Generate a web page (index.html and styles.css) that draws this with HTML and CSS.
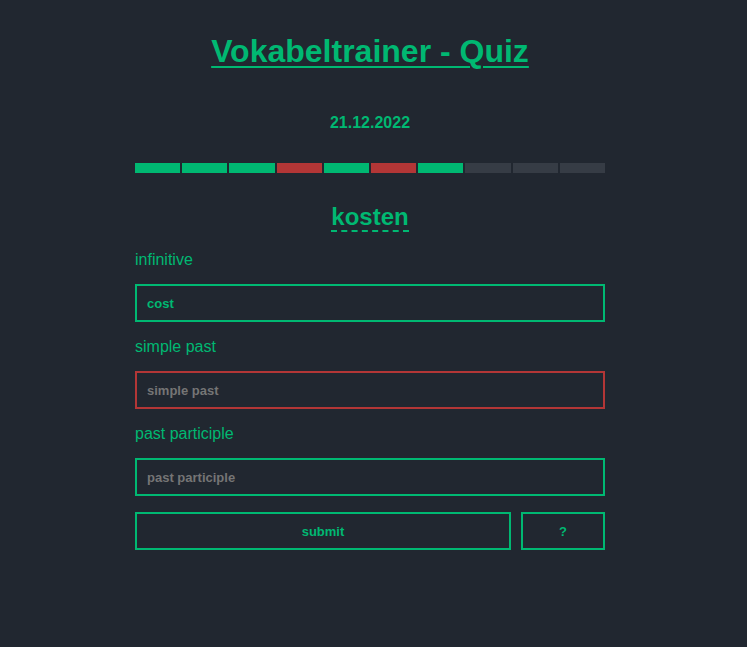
FILE: index.html
```html
<!DOCTYPE html>
<html lang="de">
<head>
<meta charset="utf-8">
<title>Vokabeltrainer - Quiz</title>
<link rel="stylesheet" href="styles.css">
</head>
<body>
<main class="quiz">
  <h1 class="title">Vokabeltrainer - Quiz</h1>
  <p class="date">21.12.2022</p>
  <div class="progress">
    <span class="seg ok"></span>
    <span class="seg ok"></span>
    <span class="seg ok"></span>
    <span class="seg bad"></span>
    <span class="seg ok"></span>
    <span class="seg bad"></span>
    <span class="seg ok"></span>
    <span class="seg"></span>
    <span class="seg"></span>
    <span class="seg"></span>
  </div>
  <div class="word-wrap"><span class="word">kosten</span></div>
  <form class="form">
    <label class="label" for="inf">infinitive</label>
    <input class="field" id="inf" type="text" value="cost" placeholder="infinitive">
    <label class="label" for="sp">simple past</label>
    <input class="field error" id="sp" type="text" placeholder="simple past" autofocus>
    <label class="label" for="pp">past participle</label>
    <input class="field" id="pp" type="text" placeholder="past participle">
    <div class="actions">
      <button class="btn submit" type="button">submit</button>
      <button class="btn hint" type="button">?</button>
    </div>
  </form>
</main>
</body>
</html>
```
FILE: styles.css
```css
* { box-sizing: border-box; }
html, body {
  margin: 0;
  background: #212730;
  height: 100%;
}
body {
  font-family: "Liberation Sans", Arial, sans-serif;
  color: #00b872;
  padding-right: 7px;
}
.quiz {
  width: 470px;
  margin: 0 auto;
  padding-top: 33px;
  display: flex;
  flex-direction: column;
}
.title {
  margin: 0;
  font-size: 32px;
  line-height: 37px;
  font-weight: bold;
  text-align: center;
  text-decoration: underline;
  text-decoration-thickness: 2px;
  text-underline-offset: 4px;
}
.date {
  margin: 44px 0 0;
  font-size: 16px;
  line-height: 18px;
  font-weight: bold;
  text-align: center;
}
.progress {
  margin-top: 31px;
  display: flex;
  gap: 2px;
  height: 10px;
}
.seg {
  flex: 1;
  background: #363c45;
}
.seg.ok { background: #00b872; }
.seg.bad { background: #b33636; }
.word-wrap {
  margin-top: 30px;
  text-align: center;
}
.word {
  display: inline-block;
  font-size: 24px;
  line-height: 27px;
  font-weight: bold;
  border-bottom: 2px dashed #00b872;
}
.form {
  display: flex;
  flex-direction: column;
  margin-top: 19px;
}
.label {
  font-size: 16px;
  line-height: 18px;
  margin-bottom: 15px;
}
.field {
  height: 38px;
  border: 2px solid #00b872;
  background: transparent;
  color: #00b872;
  font-family: "Liberation Sans", Arial, sans-serif;
  font-size: 13px;
  font-weight: bold;
  padding: 0 10px;
  margin: 0 0 16px;
  outline: none;
  caret-color: #00b872;
}
.field::placeholder { color: #757575; opacity: 1; }
.field.error { border-color: #b33636; }
.actions {
  display: flex;
  gap: 10px;
}
.btn {
  height: 38px;
  border: 2px solid #00b872;
  background: transparent;
  color: #00b872;
  font-family: "Liberation Sans", Arial, sans-serif;
  font-size: 13px;
  font-weight: bold;
  cursor: pointer;
}
.submit { flex: 1; }
.hint { width: 84px; }
```
